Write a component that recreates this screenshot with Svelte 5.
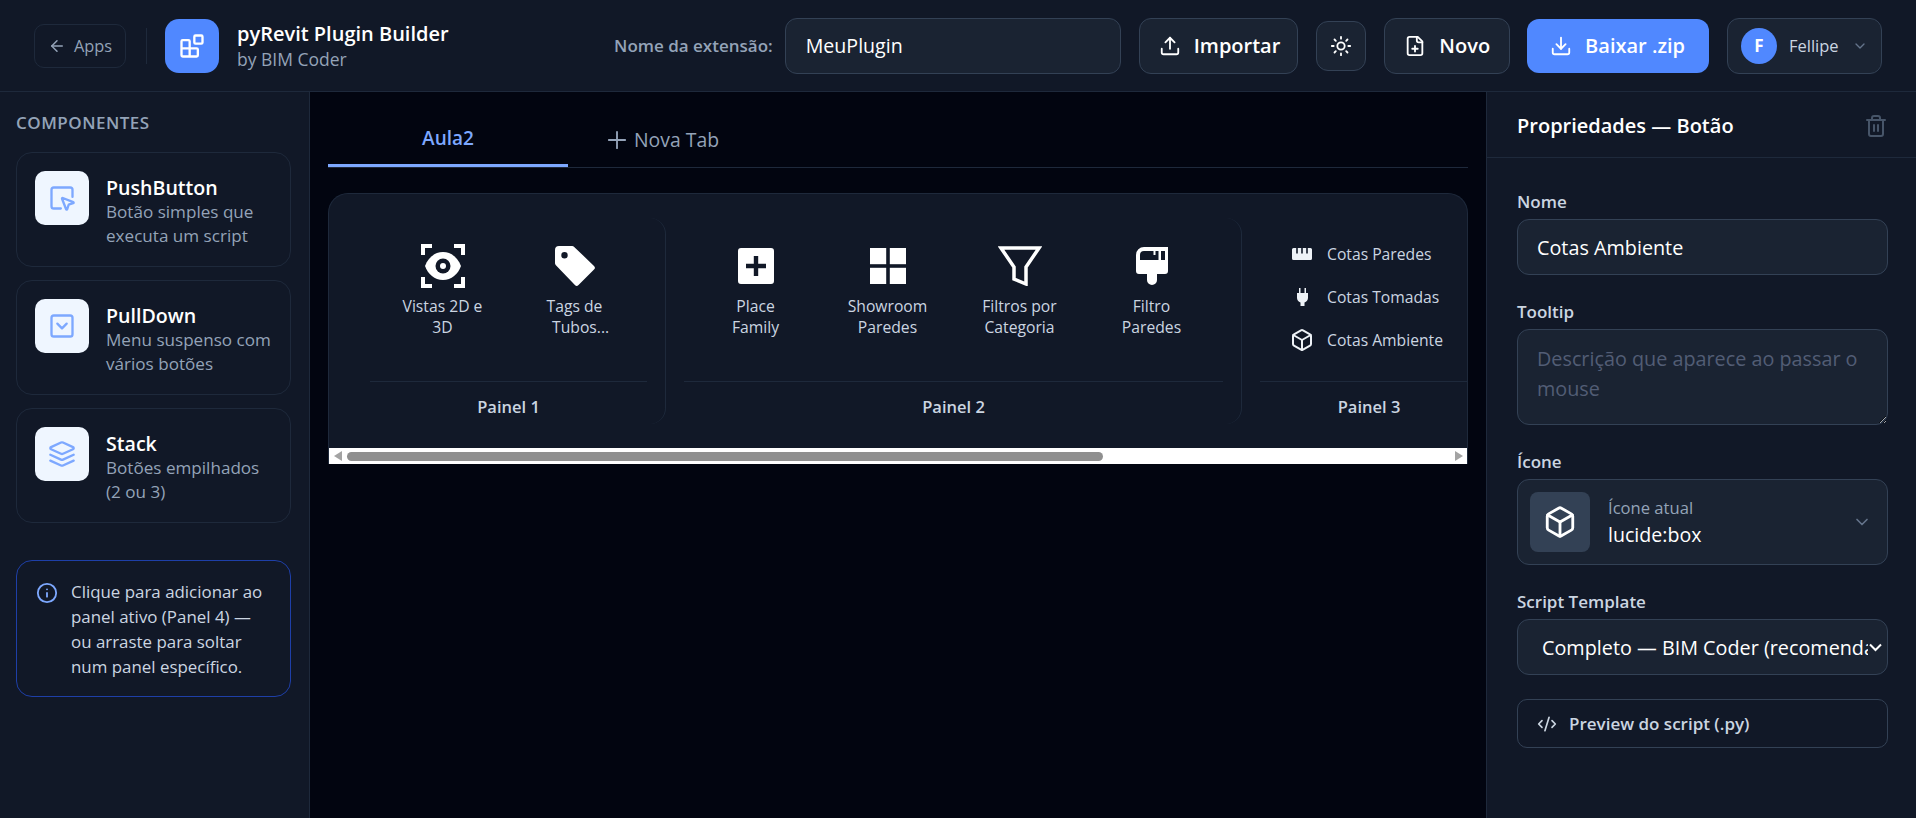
<script>
  const components = [
    { name: 'PushButton', desc: 'Botão simples que executa um script', icon: 'push' },
    { name: 'PullDown', desc: 'Menu suspenso com vários botões', icon: 'pull' },
    { name: 'Stack', desc: 'Botões empilhados (2 ou 3)', icon: 'stack' }
  ];
  let extName = 'MeuPlugin';
  let btnName = 'Cotas Ambiente';
</script>

<div class="page">
  <header class="topbar">
    <button class="back">
      <svg width="18" height="18" viewBox="0 0 24 24" class="ln"><path d="m12 19-7-7 7-7" /><path d="M19 12H5" /></svg>
      Apps
    </button>
    <div class="vline"></div>
    <div class="logo">
      <svg width="28" height="28" viewBox="0 0 24 24" class="ln"><rect x="14" y="3" width="7" height="7" rx="1" /><path d="M10 21V8a1 1 0 0 0-1-1H4a1 1 0 0 0-1 1v12a1 1 0 0 0 1 1h12a1 1 0 0 0 1-1v-5a1 1 0 0 0-1-1H3" /></svg>
    </div>
    <div class="brand">
      <div class="brand-title">pyRevit Plugin Builder</div>
      <div class="brand-sub">by BIM Coder</div>
    </div>
    <div class="spacer"></div>
    <label class="ext-label" for="ext">Nome da extensão:</label>
    <input id="ext" class="ext-input" bind:value={extName} />
    <button class="tbtn import">
      <svg width="22" height="22" viewBox="0 0 24 24" class="ln"><path d="M21 15v4a2 2 0 0 1-2 2H5a2 2 0 0 1-2-2v-4" /><path d="m17 8-5-5-5 5" /><path d="M12 3v12" /></svg>
      Importar
    </button>
    <button class="theme">
      <svg width="22" height="22" viewBox="0 0 24 24" class="ln"><circle cx="12" cy="12" r="4" /><path d="M12 2v2M12 20v2M4.93 4.93l1.41 1.41M17.66 17.66l1.41 1.41M2 12h2M20 12h2M6.34 17.66l-1.41 1.41M19.07 4.93l-1.41 1.41" /></svg>
    </button>
    <button class="tbtn novo">
      <svg width="22" height="22" viewBox="0 0 24 24" class="ln"><path d="M15 2H6a2 2 0 0 0-2 2v16a2 2 0 0 0 2 2h12a2 2 0 0 0 2-2V7Z" /><path d="M14 2v4a2 2 0 0 0 2 2h4" /><path d="M9 15h6" /><path d="M12 18v-6" /></svg>
      Novo
    </button>
    <button class="tbtn primary">
      <svg width="22" height="22" viewBox="0 0 24 24" class="ln"><path d="M21 15v4a2 2 0 0 1-2 2H5a2 2 0 0 1-2-2v-4" /><path d="m7 10 5 5 5-5" /><path d="M12 15V3" /></svg>
      Baixar .zip
    </button>
    <button class="user">
      <span class="avatar">F</span>
      <span class="user-name">Fellipe</span>
      <svg width="16" height="16" viewBox="0 0 24 24" class="ln user-chev"><path d="m6 9 6 6 6-6" /></svg>
    </button>
  </header>

  <div class="body">
    <aside class="sidebar">
      <div class="side-title">COMPONENTES</div>
      <div class="cards">
        {#each components as c}
          <div class="card">
            <div class="tile">
              <svg width="28" height="28" viewBox="0 0 24 24" class="ln">
                {#if c.icon === 'push'}
                  <path d="M12.034 12.681a.498.498 0 0 1 .647-.647l9 3.5a.5.5 0 0 1-.033.943l-3.444 1.068a1 1 0 0 0-.66.66l-1.067 3.443a.5.5 0 0 1-.943.033z" />
                  <path d="M21 11V5a2 2 0 0 0-2-2H5a2 2 0 0 0-2 2v14a2 2 0 0 0 2 2h6" />
                {:else if c.icon === 'pull'}
                  <rect x="3" y="3" width="18" height="18" rx="2" />
                  <path d="m16 10-4 4-4-4" />
                {:else}
                  <path d="M12.83 2.18a2 2 0 0 0-1.66 0L2.6 6.08a1 1 0 0 0 0 1.83l8.58 3.91a2 2 0 0 0 1.66 0l8.58-3.9a1 1 0 0 0 0-1.83Z" />
                  <path d="m22 17.65-9.17 4.16a2 2 0 0 1-1.66 0L2 17.65" />
                  <path d="m22 12.65-9.17 4.16a2 2 0 0 1-1.66 0L2 12.65" />
                {/if}
              </svg>
            </div>
            <div class="card-text">
              <div class="card-name">{c.name}</div>
              <div class="card-desc">{c.desc}</div>
            </div>
          </div>
        {/each}
      </div>
      <div class="hint">
        <svg width="22" height="22" viewBox="0 0 24 24" class="ln hint-icon"><circle cx="12" cy="12" r="10" /><path d="M12 16v-4" /><path d="M12 8h.01" /></svg>
        <p>Clique para adicionar ao panel ativo (Panel 4) — ou arraste para soltar num panel específico.</p>
      </div>
    </aside>

    <main class="main">
      <div class="tabs">
        <div class="tab active">Aula2</div>
        <div class="tab-new">
          <svg width="28" height="28" viewBox="0 0 24 24" class="ln"><path d="M5 12h14M12 5v14" /></svg>
          Nova Tab
        </div>
      </div>

      <div class="ribbon">
        <div class="ribbon-scroll">
          <section class="panel p1">
            <div class="btns">
              <div class="rbtn">
                <div class="ric">
                  <svg width="44" height="44" viewBox="0 0 44 44">
                    <path d="M2 11V2h9M33 2h9v9M42 33v9h-9M11 42H2v-9" fill="none" stroke="#fff" stroke-width="4" />
                    <path d="M22 8c8.500 0 15 5.800 18 14-3 8.200-9.500 14-18 14S7 30.200 4 22C7 13.800 13.500 8 22 8Z" fill="#fff" />
                    <circle cx="22" cy="22" r="7.500" fill="#111827" />
                    <circle cx="22" cy="22" r="3" fill="#fff" />
                  </svg>
                </div>
                <span>Vistas 2D e<br />3D</span>
              </div>
              <div class="rbtn">
                <div class="ric">
                  <svg width="40" height="40" viewBox="0 0 40 40">
                    <path fill-rule="evenodd" fill="#fff" d="M4 0h13a3 3 0 0 1 2.200.9l19.800 19a2.500 2.500 0 0 1 0 3.600L23.500 39a2.500 2.500 0 0 1-3.600 0L.9 19.200A3 3 0 0 1 0 17V4a4 4 0 0 1 4-4Zm5.500 6a3.200 3.200 0 1 0 0 6.400 3.200 3.200 0 0 0 0-6.400Z" />
                  </svg>
                </div>
                <span>Tags de<br />&nbsp;&nbsp;&nbsp;Tubos...</span>
              </div>
            </div>
            <div class="panel-name">Painel 1</div>
          </section>

          <section class="panel p2">
            <div class="btns">
              <div class="rbtn">
                <div class="ric">
                  <svg width="36" height="36" viewBox="0 0 36 36">
                    <path fill-rule="evenodd" fill="#fff" d="M3 0h30a3 3 0 0 1 3 3v30a3 3 0 0 1-3 3H3a3 3 0 0 1-3-3V3a3 3 0 0 1 3-3Zm12.800 8v7.800H8v4.400h7.800V28h4.400v-7.800H28v-4.400h-7.800V8Z" />
                  </svg>
                </div>
                <span>Place<br />Family</span>
              </div>
              <div class="rbtn">
                <div class="ric">
                  <svg width="36" height="36" viewBox="0 0 36 36" fill="#fff">
                    <rect width="16.200" height="16.200" /><rect x="19.800" width="16.200" height="16.200" />
                    <rect y="19.800" width="16.200" height="16.200" /><rect x="19.800" y="19.800" width="16.200" height="16.200" />
                  </svg>
                </div>
                <span>Showroom<br />Paredes</span>
              </div>
              <div class="rbtn">
                <div class="ric">
                  <svg width="44" height="40" viewBox="0 0 44 40">
                    <path d="M3 2h38L28 21v17l-12-5V21Z" fill="none" stroke="#fff" stroke-width="3.500" />
                  </svg>
                </div>
                <span>Filtros por<br />Categoria</span>
              </div>
              <div class="rbtn">
                <div class="ric">
                  <svg width="32" height="38" viewBox="0 0 32 38">
                    <path fill="#fff" fill-rule="evenodd" d="M8 0h24v24a3 3 0 0 1-3 3h-8v6a5 5 0 0 1-10 0v-6H3a3 3 0 0 1-3-3V8a8 8 0 0 1 8-8Zm0 4a4 4 0 0 0-4 4v5h18.500V4h-3v4h-2V4Zm17 0v9h4V4Z" />
                  </svg>
                </div>
                <span>Filtro<br />Paredes</span>
              </div>
            </div>
            <div class="panel-name">Painel 2</div>
          </section>

          <section class="panel p3">
            <div class="stack">
              <div class="srow">
                <div class="sic">
                  <svg width="20" height="12" viewBox="0 0 20 12"><path fill="#eef2f7" fill-rule="evenodd" d="M1.500 0h17A1.500 1.500 0 0 1 20 1.500v9a1.500 1.500 0 0 1-1.500 1.500h-17A1.500 1.500 0 0 1 0 10.500v-9A1.500 1.500 0 0 1 1.500 0Zm2.700 0v5.500h1.600V0Zm5 0v5.500h1.600V0Zm5 0v5.500h1.600V0Z" /></svg>
                </div>
                Cotas Paredes
              </div>
              <div class="srow">
                <div class="sic">
                  <svg width="11" height="18" viewBox="0 0 11 18"><path fill="#eef2f7" d="M2 0h1.500v5h4V0H9v5h2v5a5 5 0 0 1-3.500 4.500V18h-4v-3.500A5 5 0 0 1 0 10V5h2Z" /></svg>
                </div>
                Cotas Tomadas
              </div>
              <div class="srow">
                <div class="sic">
                  <svg width="24" height="24" viewBox="0 0 24 24" class="ln"><path d="M21 8a2 2 0 0 0-1-1.730l-7-4a2 2 0 0 0-2 0l-7 4A2 2 0 0 0 3 8v8a2 2 0 0 0 1 1.730l7 4a2 2 0 0 0 2 0l7-4A2 2 0 0 0 21 16Z" /><path d="m3.300 7 8.700 5 8.700-5" /><path d="M12 22V12" /></svg>
                </div>
                Cotas Ambiente
              </div>
            </div>
            <div class="panel-name">Painel 3</div>
          </section>
        </div>
        <div class="hbar">
          <span class="arr left"></span>
          <div class="track"><div class="thumb"></div></div>
          <span class="arr right"></span>
        </div>
      </div>
    </main>

    <aside class="props">
      <div class="props-head">
        <div class="props-title">Propriedades — Botão</div>
        <svg width="24" height="24" viewBox="0 0 24 24" class="ln trash"><path d="M3 6h18" /><path d="M19 6v14c0 1-1 2-2 2H7c-1 0-2-1-2-2V6" /><path d="M8 6V4c0-1 1-2 2-2h4c1 0 2 1 2 2v2" /><path d="M10 11v6M14 11v6" /></svg>
      </div>
      <div class="props-body">
        <div class="field">
          <label for="nome">Nome</label>
          <input id="nome" bind:value={btnName} />
        </div>
        <div class="field">
          <label for="tip">Tooltip</label>
          <textarea id="tip" placeholder="Descrição que aparece ao passar o mouse"></textarea>
        </div>
        <div class="field">
          <div class="flabel">Ícone</div>
          <div class="icon-pick">
            <div class="thumb-ic">
              <svg width="34" height="34" viewBox="0 0 24 24" class="ln"><path d="M21 8a2 2 0 0 0-1-1.730l-7-4a2 2 0 0 0-2 0l-7 4A2 2 0 0 0 3 8v8a2 2 0 0 0 1 1.730l7 4a2 2 0 0 0 2 0l7-4A2 2 0 0 0 21 16Z" /><path d="m3.300 7 8.700 5 8.700-5" /><path d="M12 22V12" /></svg>
            </div>
            <div class="pick-text">
              <div class="pick-sub">Ícone atual</div>
              <div class="pick-val">lucide:box</div>
            </div>
            <svg width="20" height="20" viewBox="0 0 24 24" class="ln pick-chev"><path d="m6 9 6 6 6-6" /></svg>
          </div>
        </div>
        <div class="field">
          <label for="tpl">Script Template</label>
          <div class="select-wrap">
            <select id="tpl">
              <option>Completo — BIM Coder (recomendado)</option>
            </select>
            <svg width="13" height="9" viewBox="0 0 13 9" class="sel-chev"><path d="M1 1.500 6.500 7 12 1.500" /></svg>
          </div>
        </div>
        <button class="preview">
          <svg width="20" height="20" viewBox="0 0 24 24" class="ln"><path d="m18 16 4-4-4-4" /><path d="m6 8-4 4 4 4" /><path d="m14.500 4-5 16" /></svg>
          Preview do script (.py)
        </button>
      </div>
    </aside>
  </div>
</div>

<style>
  :global(body) {
    margin: 0;
    background: #020617;
    font-family: "Open Sans", "Liberation Sans", sans-serif;
    color: #fff;
  }

  .page {
    height: 818px;
    display: flex;
    flex-direction: column;
    overflow: hidden;
  }

  .ln {
    fill: none;
    stroke: currentColor;
    stroke-width: 2;
    stroke-linecap: round;
    stroke-linejoin: round;
    flex-shrink: 0;
  }

  button {
    font-family: inherit;
    cursor: pointer;
  }

  /* top bar */
  .topbar {
    height: 91px;
    flex-shrink: 0;
    box-sizing: content-box;
    display: flex;
    align-items: center;
    padding: 0 34px;
    background: #111827;
    border-bottom: 1px solid #1e293b;
  }

  .back {
    width: 92px;
    height: 44px;
    display: flex;
    align-items: center;
    justify-content: center;
    gap: 8px;
    background: transparent;
    border: 1px solid #1e293b;
    border-radius: 10px;
    color: #94a3b8;
    font-size: 16.400px;
  }

  .vline {
    width: 1px;
    height: 36px;
    background: #1e293b;
    margin: 0 18px 0 20px;
  }

  .logo {
    width: 54px;
    height: 54px;
    border-radius: 14px;
    background: #5088ff;
    display: flex;
    align-items: center;
    justify-content: center;
    margin-right: 18px;
  }

  .brand-title {
    font-size: 20px;
    font-weight: 600;
    line-height: 26px;
  }

  .brand-sub {
    font-size: 17.500px;
    line-height: 22px;
    margin-top: 1px;
    color: #94a3b8;
  }

  .spacer {
    flex: 1;
  }

  .ext-label {
    font-size: 17px;
    font-weight: 600;
    color: #94a3b8;
    margin-right: 12px;
  }

  .ext-input {
    width: 336px;
    height: 56px;
    box-sizing: border-box;
    padding: 0 20px;
    background: #1a2332;
    border: 1px solid #334155;
    border-radius: 12px;
    color: #fff;
    font: 19.600px "Open Sans", sans-serif;
    margin-right: 18px;
  }

  .tbtn {
    height: 56px;
    display: flex;
    align-items: center;
    gap: 13px;
    padding: 0 19px;
    background: #1a2332;
    border: 1px solid #334155;
    border-radius: 12px;
    color: #fff;
    font-size: 20px;
    font-weight: 600;
    margin-right: 18px;
  }

  .tbtn.import {
    padding: 0 17px 0 19px;
  }

  .tbtn.novo {
    margin-right: 17px;
  }

  .tbtn.primary {
    height: 54px;
    padding: 0 24px 0 23px;
    background: #5088ff;
    border: 0;
  }

  .theme {
    width: 50px;
    height: 50px;
    display: flex;
    align-items: center;
    justify-content: center;
    background: #1a2332;
    border: 1px solid #334155;
    border-radius: 12px;
    color: #fff;
    margin-right: 18px;
  }

  .user {
    height: 56px;
    width: 155px;
    display: flex;
    align-items: center;
    padding: 0 13px;
    background: #1a2332;
    border: 1px solid #334155;
    border-radius: 12px;
    color: #cbd5e1;
    font-size: 16.500px;
  }

  .avatar {
    width: 36px;
    height: 36px;
    border-radius: 50%;
    background: #5088ff;
    color: #fff;
    font-weight: 700;
    font-size: 17px;
    display: flex;
    align-items: center;
    justify-content: center;
    margin-right: 12px;
  }

  .user-chev {
    margin-left: auto;
    color: #64748b;
  }

  /* columns */
  .body {
    flex: 1;
    display: grid;
    grid-template-columns: 310px 1fr 430px;
    min-height: 0;
  }

  .sidebar {
    background: #111827;
    border-right: 1px solid #1e293b;
    padding: 20px 18px 0 16px;
  }

  .side-title {
    font-size: 17px;
    line-height: 22px;
    font-weight: 600;
    letter-spacing: 0.5px;
    color: #94a3b8;
    margin-bottom: 18px;
  }

  .cards {
    display: flex;
    flex-direction: column;
    gap: 13px;
  }

  .card {
    display: flex;
    gap: 17px;
    padding: 18px 15px 18px 18px;
    border: 1px solid #1e293b;
    border-radius: 16px;
  }

  .tile {
    width: 54px;
    height: 54px;
    flex-shrink: 0;
    border-radius: 10px;
    background: #eff6ff;
    color: #7da8ff;
    display: flex;
    align-items: center;
    justify-content: center;
  }

  .card-text {
    margin-top: 5px;
  }

  .card-name {
    font-size: 19.600px;
    line-height: 24px;
    font-weight: 600;
  }

  .card-desc {
    font-size: 17.100px;
    line-height: 24px;
    color: #94a3b8;
  }

  .hint {
    margin-top: 37px;
    display: flex;
    gap: 13px;
    padding: 18px 22px 17px 19px;
    border: 1px solid #1e3fa8;
    border-radius: 16px;
  }

  .hint-icon {
    color: #7da8ff;
    margin-top: 3px;
  }

  .hint p {
    margin: 0;
    font-size: 16.900px;
    line-height: 25px;
    color: #cbd5e1;
  }

  /* canvas */
  .main {
    padding: 20px 18px 0;
    background: #020510;
    min-width: 0;
  }

  .tabs {
    height: 55px;
    display: flex;
    border-bottom: 1px solid #1e293b;
  }

  .tab {
    width: 240px;
    height: 55px;
    box-sizing: border-box;
    display: flex;
    align-items: center;
    justify-content: center;
    font-size: 19px;
    font-weight: 600;
  }

  .tab.active {
    color: #7da8ff;
    border-bottom: 3px solid #7da8ff;
  }

  .tab-new {
    display: flex;
    align-items: center;
    gap: 3px;
    padding-left: 35px;
    font-size: 19.400px;
    color: #94a3b8;
  }

  .tab-new svg {
    stroke-width: 1.600;
  }

  .ribbon {
    margin-top: 25px;
    background: #111827;
    border: 1px solid #1e293b;
    border-bottom: 0;
    border-radius: 20px 20px 0 0;
    overflow: hidden;
  }

  .ribbon-scroll {
    display: flex;
    padding: 24px 0 24px 23px;
    overflow: hidden;
  }

  .panel {
    box-sizing: border-box;
    height: 206px;
    flex-shrink: 0;
    padding: 0 18px;
    border-right: 1px solid #1e293b;
    border-radius: 16px;
    display: flex;
    flex-direction: column;
  }

  .p1 {
    width: 314px;
  }

  .p2 {
    width: 576px;
  }

  .p3 {
    width: 254px;
    border-right: 0;
  }

  .btns {
    flex: 1;
    display: flex;
    justify-content: center;
    border-bottom: 1px solid #1e293b;
  }

  .rbtn {
    width: 132px;
    display: flex;
    flex-direction: column;
    align-items: center;
    padding-top: 26px;
    text-align: center;
    font-size: 15.700px;
    line-height: 21px;
    color: #cbd5e1;
  }

  .ric {
    height: 44px;
    margin-bottom: 8px;
    display: flex;
    align-items: center;
    justify-content: center;
  }

  .stack {
    flex: 1;
    width: 218px;
    flex-shrink: 0;
    box-sizing: border-box;
    padding: 14px 0 0 31px;
    border-bottom: 1px solid #1e293b;
    overflow: hidden;
  }

  .srow {
    height: 43px;
    display: flex;
    align-items: center;
    gap: 14px;
    font-size: 15.700px;
    color: #cbd5e1;
    white-space: nowrap;
  }

  .sic {
    width: 22px;
    display: flex;
    justify-content: center;
    color: #eef2f7;
  }

  .panel-name {
    height: 42px;
    flex-shrink: 0;
    display: flex;
    align-items: center;
    justify-content: center;
    padding-top: 7px;
    box-sizing: border-box;
    font-size: 16.500px;
    font-weight: 600;
    color: #cbd5e1;
  }

  .p3 .panel-name {
    width: 218px;
  }

  .hbar {
    height: 16px;
    background: #fff;
    display: flex;
    align-items: center;
  }

  .arr {
    width: 0;
    height: 0;
    border-top: 5px solid transparent;
    border-bottom: 5px solid transparent;
  }

  .arr.left {
    border-right: 8px solid #a3a3a3;
    margin: 0 5px 0 5px;
  }

  .arr.right {
    border-left: 8px solid #a3a3a3;
    margin: 0 4px 0 5px;
  }

  .track {
    flex: 1;
    height: 9px;
  }

  .thumb {
    width: 756px;
    height: 9px;
    border-radius: 5px;
    background: #8f8f8f;
  }

  /* properties */
  .props {
    background: #111827;
    border-left: 1px solid #1e293b;
  }

  .props-head {
    height: 66px;
    box-sizing: border-box;
    display: flex;
    align-items: center;
    justify-content: space-between;
    padding: 2px 28px 0 30px;
    border-bottom: 1px solid #1e293b;
  }

  .props-title {
    font-size: 20px;
    font-weight: 600;
  }

  .trash {
    color: #475569;
  }

  .props-body {
    padding: 33px 28px 0 30px;
    display: flex;
    flex-direction: column;
    gap: 26px;
  }

  .field {
    display: flex;
    flex-direction: column;
  }

  .field label,
  .flabel {
    font-size: 17px;
    line-height: 22px;
    font-weight: 600;
    color: #cbd5e1;
    margin-bottom: 6px;
  }

  .field input,
  .field textarea,
  .field select {
    box-sizing: border-box;
    width: 100%;
    background: #1a2332;
    border: 1px solid #334155;
    border-radius: 12px;
    color: #fff;
    font: 19.800px "Open Sans", sans-serif;
  }

  .field input {
    height: 56px;
    padding: 0 19px;
  }

  .field textarea {
    height: 96px;
    padding: 14px 19px;
    line-height: 30px;
    display: block;
  }

  .field textarea::placeholder {
    color: #525d75;
  }

  .select-wrap {
    position: relative;
  }

  .field select {
    display: block;
    height: 56px;
    padding: 0 19px 0 24px;
    appearance: none;
  }

  .sel-chev {
    position: absolute;
    top: 24px;
    right: 6px;
    fill: none;
    stroke: #fff;
    stroke-width: 2;
    pointer-events: none;
  }

  .icon-pick {
    height: 86px;
    box-sizing: border-box;
    display: flex;
    align-items: center;
    padding: 0 12px;
    background: #1a2332;
    border: 1px solid #334155;
    border-radius: 12px;
  }

  .thumb-ic {
    width: 60px;
    height: 60px;
    border-radius: 8px;
    background: #334155;
    display: flex;
    align-items: center;
    justify-content: center;
    margin-right: 18px;
  }

  .pick-sub {
    font-size: 16.600px;
    line-height: 26px;
    color: #94a3b8;
  }

  .pick-val {
    font-size: 19.600px;
    line-height: 28px;
  }

  .pick-chev {
    margin-left: auto;
    margin-right: 3px;
    color: #64748b;
  }

  .preview {
    margin-top: -2px;
    height: 49px;
    display: flex;
    align-items: center;
    gap: 12px;
    padding: 0 19px;
    background: transparent;
    border: 1px solid #334155;
    border-radius: 10px;
    color: #cbd5e1;
    font-size: 17px;
    font-weight: 600;
  }
</style>
